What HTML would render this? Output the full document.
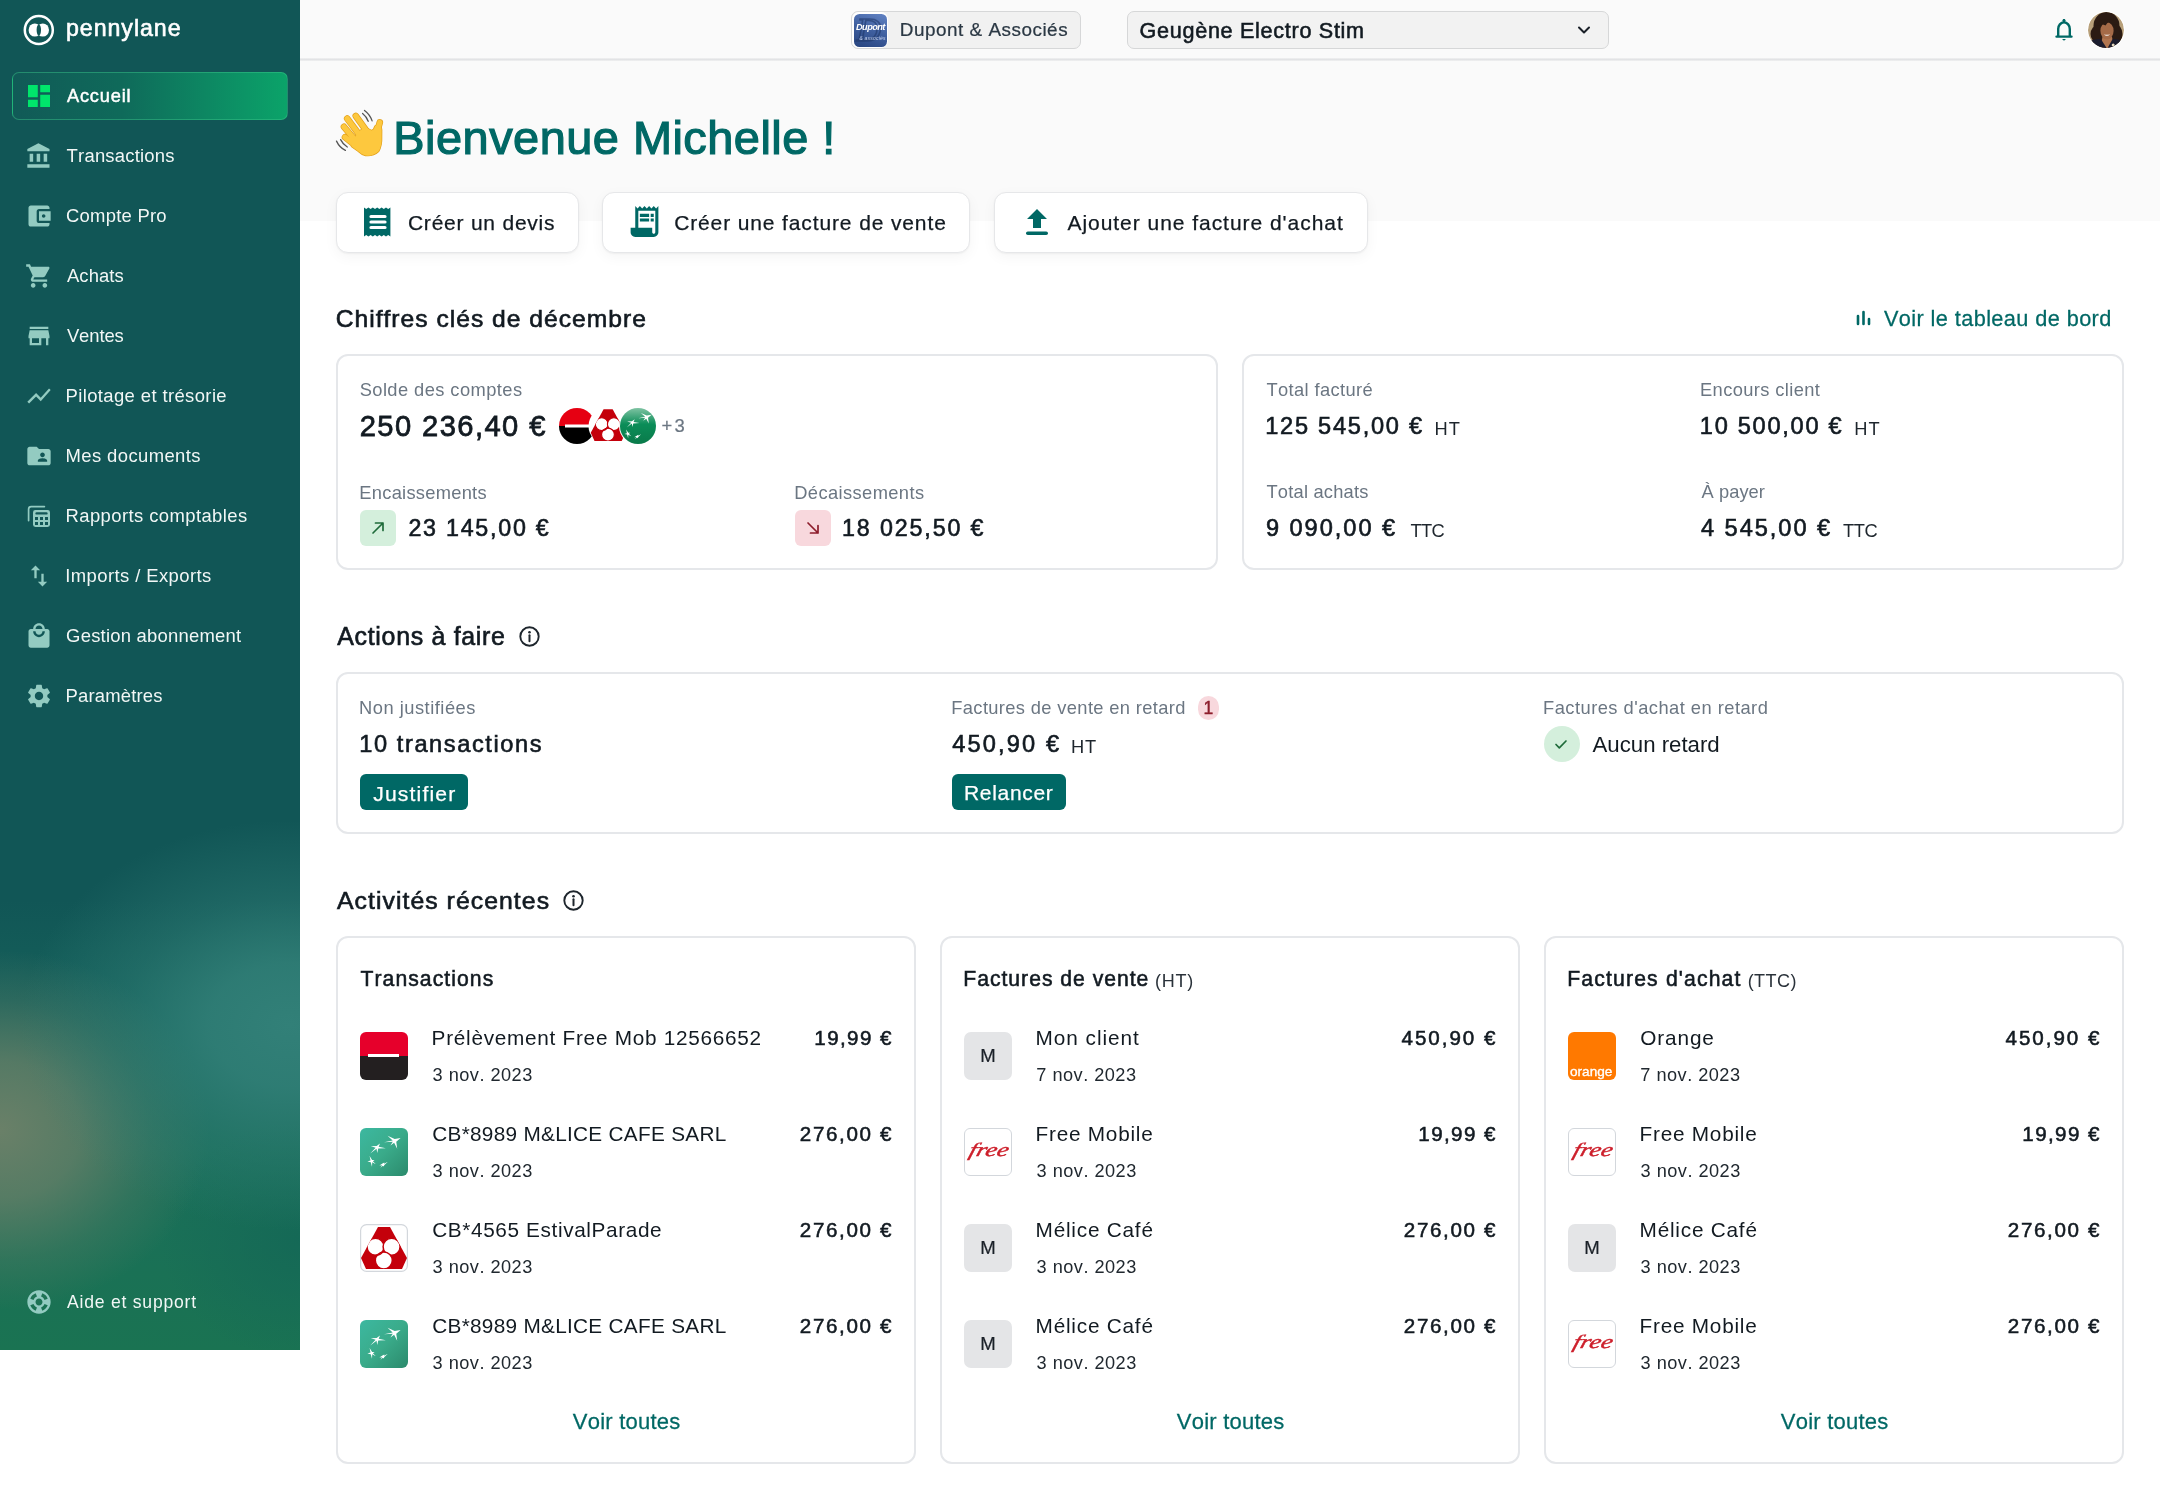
<!DOCTYPE html><html><head><meta charset="utf-8"><style>
*{margin:0;padding:0;box-sizing:border-box}
html,body{width:2160px;height:1500px;overflow:hidden;background:#fff}
body{position:relative;font-family:"Liberation Sans",sans-serif;color:#121a21}
.t{position:absolute;white-space:nowrap;font-kerning:none}
.b{position:absolute;display:block}
</style></head><body><div id="wrap" style="position:absolute;left:0;top:0;width:2160px;height:1500px;will-change:transform"><div class="b" style="left:300px;top:0px;width:1860px;height:221px;background:#fafafa"></div>
<div class="b" style="left:300px;top:58px;width:1860px;height:3px;background:linear-gradient(180deg,#f1f1f2,#e2e3e5,#f1f1f2)"></div>
<div class="b" style="left:0;top:0;width:300px;height:1350px;background:radial-gradient(ellipse 270px 205px at 290px 1025px, rgba(50,128,120,1) 0%, rgba(50,128,120,0.85) 30%, rgba(50,128,120,0.4) 62%, rgba(50,128,120,0) 100%),radial-gradient(ellipse 210px 180px at 0px 1130px, rgba(106,128,104,1) 0%, rgba(106,128,104,0.75) 38%, rgba(106,128,104,0.28) 72%, rgba(106,128,104,0) 100%),radial-gradient(ellipse 140px 120px at 300px 1240px, rgba(20,104,86,0.9) 0%, rgba(20,104,86,0) 100%),linear-gradient(180deg, #115656 0px, #115656 900px, #15605a 1000px, #1a6e5a 1150px, #1a7352 1350px)"></div>
<svg class="b" style="left:22px;top:13px;" width="34" height="34" viewBox="0 0 34 34"><circle cx="16.8" cy="17" r="14" fill="none" stroke="#fff" stroke-width="2.5"/><ellipse cx="12.8" cy="17" rx="6.2" ry="6.6" fill="#fff"/><ellipse cx="20.8" cy="17" rx="6.2" ry="6.6" fill="#fff"/><ellipse cx="16.8" cy="17" rx="2.2" ry="5.6" fill="#115656"/></svg>
<div class="t" style="left:66.00px;top:17.10px;font-size:23.2px;line-height:23.2px;letter-spacing:0.944px;-webkit-text-stroke:0.60px #fff;color:#fff;">pennylane</div>
<div class="b" style="left:12px;top:72px;width:276px;height:48px;border-radius:7px;background:linear-gradient(90deg,#115a57 0%,#0f6a5a 40%,#0c9566 85%,#0ba369 100%);border:1px solid rgba(60,200,140,0.45)"></div>
<svg class="b" style="left:28px;top:85px;" width="22" height="22" viewBox="3 3 18 18"><path fill="#00e56b" d="M3 13h8V3H3v10zm0 8h8v-6H3v6zm10 0h8V11h-8v10zm0-18v6h8V3h-8z"/></svg>
<div class="t" style="left:66.96px;top:87.36px;font-size:18.21px;line-height:18.21px;letter-spacing:0.842px;-webkit-text-stroke:0.47px #fff;color:#fff;">Accueil</div>
<svg class="b" style="left:25px;top:142px;" width="28" height="28" viewBox="0 0 24 24"><g fill="#93cbc1"><path d="M4 10v7h3v-7H4zm6 0v7h3v-7h-3zM2 22h19v-3H2v3zm14-12v7h3v-7h-3zm-4.5-9L2 6v2h19V6l-9.5-5z"/></g></svg>
<div class="t" style="left:66.59px;top:146.97px;font-size:18.46px;line-height:18.46px;letter-spacing:0.219px;color:#f2f7f6;">Transactions</div>
<svg class="b" style="left:25px;top:202px;" width="28" height="28" viewBox="0 0 24 24"><g fill="#93cbc1"><path d="M21 18v1c0 1.1-.9 2-2 2H5c-1.11 0-2-.9-2-2V5c0-1.1.89-2 2-2h14c1.1 0 2 .9 2 2v1h-9c-1.11 0-2 .9-2 2v8c0 1.1.89 2 2 2h9zm-9-2h10V8H12v8zm4-2.5c-.83 0-1.5-.67-1.5-1.5s.67-1.5 1.5-1.5 1.5.67 1.5 1.5-.67 1.5-1.5 1.5z"/></g></svg>
<div class="t" style="left:66.06px;top:206.97px;font-size:18.46px;line-height:18.46px;letter-spacing:0.236px;color:#f2f7f6;">Compte Pro</div>
<svg class="b" style="left:25px;top:262px;" width="28" height="28" viewBox="0 0 24 24"><g fill="#93cbc1"><path d="M7 18c-1.1 0-1.99.9-1.99 2S5.9 22 7 22s2-.9 2-2-.9-2-2-2zM1 2v2h2l3.6 7.59-1.35 2.45c-.16.28-.25.61-.25.96 0 1.1.9 2 2 2h12v-2H7.42c-.14 0-.25-.11-.25-.25l.03-.12.9-1.63h7.45c.75 0 1.41-.41 1.75-1.03l3.58-6.49c.08-.14.12-.31.12-.48 0-.55-.45-1-1-1H5.21l-.94-2H1zm16 16c-1.1 0-1.99.9-1.99 2s.89 2 1.99 2 2-.9 2-2-.9-2-2-2z"/></g></svg>
<div class="t" style="left:66.96px;top:266.97px;font-size:18.46px;line-height:18.46px;letter-spacing:0.094px;color:#f2f7f6;">Achats</div>
<svg class="b" style="left:25px;top:322px;" width="28" height="28" viewBox="0 0 24 24"><g fill="#93cbc1"><path d="M20 4H4v2h16V4zm1 10v-2l-1-5H4l-1 5v2h1v6h10v-6h4v6h2v-6h1zm-9 4H6v-4h6v4z"/></g></svg>
<div class="t" style="left:66.92px;top:326.97px;font-size:18.46px;line-height:18.46px;letter-spacing:-0.105px;color:#f2f7f6;">Ventes</div>
<svg class="b" style="left:25px;top:382px;" width="28" height="28" viewBox="0 0 24 24"><g fill="#93cbc1"><path d="M3.5 18.49l6-6.01 4 4L22 6.92l-1.41-1.41-7.09 7.97-4-4L2 16.99z"/></g></svg>
<div class="t" style="left:65.49px;top:386.97px;font-size:18.46px;line-height:18.46px;letter-spacing:0.39px;color:#f2f7f6;">Pilotage et trésorie</div>
<svg class="b" style="left:25px;top:442px;" width="28" height="28" viewBox="0 0 24 24"><g fill="#93cbc1"><path d="M20 6h-8l-2-2H4c-1.1 0-1.99.9-1.99 2L2 18c0 1.1.9 2 2 2h16c1.1 0 2-.9 2-2V8c0-1.1-.9-2-2-2zm-5 3c1.1 0 2 .9 2 2s-.9 2-2 2-2-.9-2-2 .9-2 2-2zm4 8h-8v-1c0-1.33 2.67-2 4-2s4 .67 4 2v1z"/></g></svg>
<div class="t" style="left:65.49px;top:446.97px;font-size:18.46px;line-height:18.46px;letter-spacing:0.407px;color:#f2f7f6;">Mes documents</div>
<svg class="b" style="left:24px;top:502px;" width="30" height="30" viewBox="0 0 30 30"><path d="M4.6 18.6V7.2Q4.6 4.6 7.2 4.6H20.4" fill="none" stroke="#93cbc1" stroke-width="1.7" stroke-linecap="round"/><rect x="9" y="8" width="17" height="17" rx="2.4" fill="#93cbc1"/><g fill="#115656"><rect x="11.4" y="10.2" width="12.2" height="2.4" rx="1.2"/><rect x="11" y="15" width="3" height="3"/><rect x="16" y="15" width="3" height="3"/><rect x="21" y="15" width="3" height="3"/><rect x="11" y="20" width="3" height="3"/><rect x="16" y="20" width="3" height="3"/><rect x="21" y="20" width="3" height="3"/></g></svg>
<div class="t" style="left:65.49px;top:506.97px;font-size:18.46px;line-height:18.46px;letter-spacing:0.414px;color:#f2f7f6;">Rapports comptables</div>
<svg class="b" style="left:25px;top:562px;" width="28" height="28" viewBox="0 0 24 24"><g fill="#93cbc1"><path d="M9 3L5 6.99h3V14h2V6.99h3L9 3zm7 14.01V10h-2v7.01h-3L15 21l4-3.99h-3z"/></g></svg>
<div class="t" style="left:65.30px;top:566.97px;font-size:18.46px;line-height:18.46px;letter-spacing:0.41px;color:#f2f7f6;">Imports / Exports</div>
<svg class="b" style="left:25px;top:622px;" width="28" height="28" viewBox="0 0 24 24"><g fill="#93cbc1"><path d="M19 6h-2c0-2.76-2.24-5-5-5S7 3.24 7 6H5c-1.1 0-1.99.9-1.99 2L3 20c0 1.1.9 2 2 2h14c1.1 0 2-.9 2-2V8c0-1.1-.9-2-2-2zm-7-3c1.66 0 3 1.34 3 3H9c0-1.66 1.34-3 3-3zm0 10c-2.76 0-5-2.24-5-5h2c0 1.66 1.34 3 3 3s3-1.34 3-3h2c0 2.76-2.24 5-5 5z"/></g></svg>
<div class="t" style="left:66.07px;top:626.97px;font-size:18.46px;line-height:18.46px;letter-spacing:0.234px;color:#f2f7f6;">Gestion abonnement</div>
<svg class="b" style="left:25px;top:682px;" width="28" height="28" viewBox="0 0 24 24"><g fill="#93cbc1"><path d="M19.14 12.94c.04-.3.06-.61.06-.94 0-.32-.02-.64-.07-.94l2.03-1.58c.18-.14.23-.41.12-.61l-1.92-3.32c-.12-.22-.37-.29-.59-.22l-2.39.96c-.5-.38-1.03-.7-1.62-.94l-.36-2.54c-.04-.24-.24-.41-.48-.41h-3.84c-.24 0-.43.17-.47.41l-.36 2.54c-.59.24-1.13.57-1.62.94l-2.39-.96c-.22-.08-.47 0-.59.22L2.74 8.87c-.12.21-.08.47.12.61l2.03 1.58c-.05.3-.09.63-.09.94s.02.64.07.94l-2.03 1.58c-.18.14-.23.41-.12.61l1.92 3.32c.12.22.37.29.59.22l2.39-.96c.5.38 1.03.7 1.62.94l.36 2.54c.05.24.24.41.48.41h3.84c.24 0 .44-.17.47-.41l.36-2.54c.59-.24 1.13-.56 1.62-.94l2.39.96c.22.08.47 0 .59-.22l1.92-3.32c.12-.22.07-.47-.12-.61l-2.01-1.58zM12 15.6c-1.98 0-3.6-1.62-3.6-3.6s1.62-3.6 3.6-3.6 3.6 1.62 3.6 3.6-1.62 3.6-3.6 3.6z"/></g></svg>
<div class="t" style="left:65.49px;top:686.97px;font-size:18.46px;line-height:18.46px;letter-spacing:0.186px;color:#f2f7f6;">Paramètres</div>
<svg class="b" style="left:25px;top:1288px;" width="28" height="28" viewBox="0 0 24 24"><path fill="#93cbc1" d="M12 2C6.48 2 2 6.48 2 12s4.48 10 10 10 10-4.48 10-10S17.52 2 12 2zm7.46 7.12-2.78 1.15c-.51-1.36-1.58-2.44-2.95-2.94l1.15-2.78c2.1.8 3.77 2.47 4.58 4.57zM12 15c-1.66 0-3-1.34-3-3s1.34-3 3-3 3 1.34 3 3-1.34 3-3 3zM9.13 4.54l1.17 2.78c-1.38.5-2.47 1.59-2.98 2.97L4.54 9.13c.81-2.110 2.48-3.78 4.59-4.59zM4.54 14.87l2.78-1.15c.51 1.38 1.59 2.46 2.97 2.96l-1.17 2.780c-2.1-.81-3.77-2.48-4.58-4.59zm10.34 4.59-1.15-2.78c1.37-.51 2.45-1.59 2.95-2.97l2.78 1.17c-.81 2.1-2.48 3.77-4.58 4.58z"/></svg>
<div class="t" style="left:66.97px;top:1293.70px;font-size:17.59px;line-height:17.59px;letter-spacing:0.774px;color:#f2f7f6;">Aide et support</div>
<div class="b" style="left:851px;top:11px;width:230px;height:38px;background:#f1f1f1;border:1px solid #d6d7d8;border-radius:7px"></div>
<div class="b" style="left:852px;top:12px;width:36px;height:36px;border-radius:7px;background:#fff;padding:1.5px"><div style="width:33px;height:33px;border-radius:5.5px;background:linear-gradient(200deg,#6283c4 0%,#3f5f9f 50%,#27447f 100%);position:relative;overflow:hidden"><div style="position:absolute;left:3px;top:-1px;font:italic 400 34px/34px 'Liberation Serif',serif;color:transparent;-webkit-text-stroke:1.6px rgba(30,52,100,0.55)">D</div><div style="position:absolute;left:2.5px;top:8.5px;font:italic 700 9.2px/10px 'Liberation Sans',sans-serif;color:#fff;letter-spacing:-0.55px">Dupont</div><div style="position:absolute;left:6px;top:21px;font:italic 400 5px/6px 'Liberation Sans',sans-serif;color:#c9d6f2;letter-spacing:0.2px">&amp; associés</div></div></div>
<div class="t" style="left:899.85px;top:20.76px;font-size:18.86px;line-height:18.86px;letter-spacing:0.524px;-webkit-text-stroke:0.23px #2b3844;color:#2b3844;">Dupont &amp; Associés</div>
<div class="b" style="left:1127px;top:11px;width:482px;height:38px;background:#f2f2f2;border:1px solid #d6d7d8;border-radius:7px"></div>
<div class="t" style="left:1139.62px;top:19.93px;font-size:21.57px;line-height:21.57px;letter-spacing:0.71px;-webkit-text-stroke:0.56px #121a21;color:#121a21;">Geugène Electro Stim</div>
<svg class="b" style="left:1577px;top:25px;" width="14" height="10" viewBox="0 0 14 10"><path d="M2 2.5l5 5 5-5" fill="none" stroke="#1a2028" stroke-width="2" stroke-linecap="round" stroke-linejoin="round"/></svg>
<svg class="b" style="left:2054px;top:18px;" width="20" height="24" viewBox="0 0 20 24"><path d="M10 2.2v1.6M4.2 18.2V11c0-3.6 2.5-6.6 5.8-6.6s5.8 3 5.8 6.6v7.2M2.5 18.6h15" fill="none" stroke="#006865" stroke-width="2.4" stroke-linecap="round"/><path d="M8 21h4l-2 1.8z" fill="#006865"/><circle cx="10" cy="2.6" r="1.5" fill="#006865"/></svg>
<div class="b" style="left:2087px;top:11px;width:38px;height:38px;border-radius:50%;background:#fff;padding:1px"><svg width="36" height="36" viewBox="0 0 36 36" style="display:block;border-radius:50%"><defs><clipPath id="av"><circle cx="18" cy="18" r="18"/></clipPath></defs><g clip-path="url(#av)"><rect width="36" height="36" fill="#b8a07a"/><ellipse cx="18.5" cy="14" rx="13" ry="14" fill="#2b1b13"/><ellipse cx="10" cy="22" rx="7.5" ry="9" fill="#2b1b13"/><ellipse cx="27" cy="22" rx="7.5" ry="10" fill="#2b1b13"/><path d="M12 36L14.5 25H24L26 36Z" fill="#b27650"/><ellipse cx="19" cy="18.8" rx="6.6" ry="8.6" fill="#a56b48"/><path d="M9 14Q12 4 26 8.5Q21 8 17.5 13.5Q14 11.5 9 14Z" fill="#2b1b13"/><path d="M15.8 22.4Q19 25.4 22.2 22.2Q19 23.4 15.8 22.4Z" fill="#fff"/><path d="M0 36V30Q6 26.5 13 27.2L18.6 36Z" fill="#1b1c2e"/><path d="M36 36V30Q30 26.5 24.5 27.2L19.6 36Z" fill="#1b1c2e"/><circle cx="25.2" cy="33" r="1.5" fill="#e5d9bd"/></g></svg></div>
<svg class="b" style="left:332px;top:106px;" width="56" height="56" viewBox="0 0 56 56"><g stroke="#555" stroke-width="1.3" fill="none" stroke-linecap="round"><path d="M30.6 7.5Q34.5 10.5 36.2 15.3"/><path d="M32.5 4.5Q38 8.5 40.1 14.9"/><path d="M8.6 33.6Q11 38.5 15.3 41"/><path d="M4.5 35.1Q7.5 41.5 13.4 44.4"/></g><g stroke="#e3a11c" stroke-width="6.6" stroke-linecap="round" fill="none"><path d="M23.8 10L33.5 23.5M15.2 12.6L27.5 29M12 20.8L23.5 34.5M13 31.2L21.5 38M47.8 16.5L45 26"/></g><g fill="#e3a11c" stroke="#e3a11c" stroke-width="1.4" stroke-linejoin="round"><path d="M20 37L26 26L33 21L39.5 24.5Q42 24 43 20L48.5 17Q50.2 24 49.6 30.5Q50 40 46.5 45.5Q41 50.5 33.5 49.5Q29.5 48.5 26.5 45.5L19.5 40.5Z"/></g><g stroke="#fdc83e" stroke-width="5.2" stroke-linecap="round" fill="none"><path d="M23.8 10L33.5 23.5M15.2 12.6L27.5 29M12 20.8L23.5 34.5M13 31.2L21.5 38M47.8 16.5L45 26"/></g><g fill="#fdc83e"><path d="M20 37L26 26L33 21L39.5 24.5Q42 24 43 20L48.5 17Q50.2 24 49.6 30.5Q50 40 46.5 45.5Q41 50.5 33.5 49.5Q29.5 48.5 26.5 45.5L19.5 40.5Z"/></g></svg>
<div class="t" style="left:393.35px;top:114.63px;font-size:46.92px;line-height:46.92px;letter-spacing:0.482px;-webkit-text-stroke:1.22px #006865;color:#006865;">Bienvenue Michelle !</div>
<div class="b" style="left:336px;top:192px;width:243px;height:61px;background:#fff;border:1px solid #e6e7e9;border-radius:12px;box-shadow:0 1px 2px rgba(0,0,0,0.05),0 4px 14px rgba(0,0,0,0.045)"></div>
<div class="b" style="left:602px;top:192px;width:368px;height:61px;background:#fff;border:1px solid #e6e7e9;border-radius:12px;box-shadow:0 1px 2px rgba(0,0,0,0.05),0 4px 14px rgba(0,0,0,0.045)"></div>
<div class="b" style="left:994px;top:192px;width:374px;height:61px;background:#fff;border:1px solid #e6e7e9;border-radius:12px;box-shadow:0 1px 2px rgba(0,0,0,0.05),0 4px 14px rgba(0,0,0,0.045)"></div>
<svg class="b" style="left:363px;top:206px;" width="30" height="32" viewBox="0 0 30 32"><path d="M1 1.5l2.2 1.6 2.2-1.6 2.2 1.6 2.2-1.6 2.2 1.6 2.2-1.6 2.2 1.6 2.2-1.6 2.2 1.6 2.2-1.6 2.2 1.6 2.2-1.6V30.5l-2.2-1.6-2.2 1.6-2.2-1.6-2.2 1.6-2.2-1.6-2.2 1.6-2.2-1.6-2.2 1.6-2.2-1.6-2.2 1.6-2.2-1.6-2.2 1.6z" fill="#006865"/><g stroke="#fff" stroke-width="3.2" stroke-linecap="round"><path d="M8 10.5h14M8 16h14M8 21.5h14"/></g></svg>
<div class="t" style="left:407.93px;top:211.77px;font-size:21.0px;line-height:21.0px;letter-spacing:0.774px;-webkit-text-stroke:0.25px #121a21;color:#121a21;">Créer un devis</div>
<svg class="b" style="left:626px;top:203px;" width="37" height="37" viewBox="0 0 24 24"><g fill="#006865"><path d="M19.5 3.5 18 2l-1.5 1.5L15 2l-1.5 1.5L12 2l-1.5 1.5L9 2 7.5 3.5 6 2v14H3v3c0 1.66 1.34 3 3 3h12c1.66 0 3-1.34 3-3V2l-1.5 1.5zM19 19c0 .55-.45 1-1 1s-1-.45-1-1v-3H8V5h11v14z"/><path d="M9 7h6v2H9zm7 0h2v2h-2zm-7 3h6v2H9zm7 0h2v2h-2z"/></g></svg>
<div class="t" style="left:674.13px;top:212.07px;font-size:21.0px;line-height:21.0px;letter-spacing:0.875px;-webkit-text-stroke:0.25px #121a21;color:#121a21;">Créer une facture de vente</div>
<svg class="b" style="left:1022px;top:206px;" width="30" height="32" viewBox="0 0 30 32"><path d="M15 3l-10 10h6v9h8v-9h6z" fill="#006865"/><rect x="4" y="25.5" width="22" height="3.6" rx="1.8" fill="#006865"/></svg>
<div class="t" style="left:1067.46px;top:212.07px;font-size:21.0px;line-height:21.0px;letter-spacing:0.96px;-webkit-text-stroke:0.25px #121a21;color:#121a21;">Ajouter une facture d'achat</div>
<div class="t" style="left:335.65px;top:306.65px;font-size:24.65px;line-height:24.65px;letter-spacing:1.004px;-webkit-text-stroke:0.64px #121a21;color:#121a21;">Chiffres clés de décembre</div>
<svg class="b" style="left:1855px;top:310px;" width="18" height="16" viewBox="0 0 18 16"><g stroke="#006865" stroke-width="2.6" stroke-linecap="round"><path d="M3 6v8M8.5 2v12M14 9v5"/></g></svg>
<div class="t" style="left:1883.90px;top:307.81px;font-size:21.71px;line-height:21.71px;letter-spacing:0.411px;-webkit-text-stroke:0.26px #006865;color:#006865;">Voir le tableau de bord</div>
<div class="b" style="left:336px;top:354px;width:882px;height:216px;background:#fff;border:2px solid #e5e7ea;border-radius:12px"></div>
<div class="b" style="left:1242px;top:354px;width:882px;height:216px;background:#fff;border:2px solid #e5e7ea;border-radius:12px"></div>
<div class="t" style="left:359.67px;top:381.25px;font-size:18.31px;line-height:18.31px;letter-spacing:0.423px;color:#6b7682;">Solde des comptes</div>
<div class="t" style="left:359.73px;top:411.96px;font-size:29.13px;line-height:29.13px;letter-spacing:1.417px;-webkit-text-stroke:0.76px #121a21;color:#121a21;">250 236,40 €</div>
<svg class="b" style="left:557px;top:406px;" width="102" height="40" viewBox="0 0 102 40"><defs><clipPath id="c1"><circle cx="20" cy="20" r="18"/></clipPath><linearGradient id="bnpg" x1="0" y1="0" x2="0" y2="1"><stop offset="0" stop-color="#7fc3a3"/><stop offset="0.45" stop-color="#0b8d58"/><stop offset="1" stop-color="#0a7a4a"/></linearGradient></defs><g clip-path="url(#c1)"><rect x="0" y="0" width="40" height="20" fill="#e60012"/><rect x="0" y="20" width="40" height="20" fill="#000"/><rect x="8" y="18.5" width="26" height="3" fill="#fff"/></g><circle cx="50" cy="20" r="18.5" fill="#fff"/><g transform="translate(33,1) scale(0.755)"><use href="#cmshape"/></g><circle cx="81" cy="20" r="19" fill="#fff"/><circle cx="81" cy="20" r="18" fill="url(#bnpg)"/><g fill="#fff" transform="translate(61.3,0.5) scale(0.82)"><use href="#bnpstars"/></g></svg>
<div class="t" style="left:661.60px;top:417.17px;font-size:18.43px;line-height:18.43px;letter-spacing:2.197px;-webkit-text-stroke:0.22px #6b7682;color:#6b7682;">+3</div>
<div class="t" style="left:359.30px;top:483.65px;font-size:18.31px;line-height:18.31px;letter-spacing:0.267px;color:#6b7682;">Encaissements</div>
<div class="b" style="left:360px;top:510px;width:36px;height:36px;background:#d4efdc;border-radius:6px"></div>
<svg class="b" style="left:369px;top:519px;" width="18" height="18" viewBox="0 0 18 18"><path d="M4 14L14 4M6.5 4H14v7.5" fill="none" stroke="#1f6b3a" stroke-width="1.7" stroke-linecap="round" stroke-linejoin="round"/></svg>
<div class="t" style="left:408.43px;top:517.07px;font-size:23.25px;line-height:23.25px;letter-spacing:1.748px;-webkit-text-stroke:0.60px #121a21;color:#121a21;">23 145,00 €</div>
<div class="t" style="left:794.20px;top:483.65px;font-size:18.31px;line-height:18.31px;letter-spacing:0.4px;color:#6b7682;">Décaissements</div>
<div class="b" style="left:795px;top:510px;width:36px;height:36px;background:#f8d8dd;border-radius:6px"></div>
<svg class="b" style="left:804px;top:519px;" width="18" height="18" viewBox="0 0 18 18"><path d="M4 4L14 14M14 6.5V14H6.5" fill="none" stroke="#8d1d2c" stroke-width="1.7" stroke-linecap="round" stroke-linejoin="round"/></svg>
<div class="t" style="left:842.03px;top:517.07px;font-size:23.25px;line-height:23.25px;letter-spacing:1.868px;-webkit-text-stroke:0.60px #121a21;color:#121a21;">18 025,50 €</div>
<div class="t" style="left:1266.49px;top:381.44px;font-size:18.31px;line-height:18.31px;letter-spacing:0.38px;color:#6b7682;">Total facturé</div>
<div class="t" style="left:1265.20px;top:415.44px;font-size:23.6px;line-height:23.6px;letter-spacing:1.74px;-webkit-text-stroke:0.61px #121a21;color:#121a21;">125 545,00 €</div>
<div class="t" style="left:1434.50px;top:420.05px;font-size:18.31px;line-height:18.31px;letter-spacing:1.015px;color:#1e262d;">HT</div>
<div class="t" style="left:1700.00px;top:381.44px;font-size:18.31px;line-height:18.31px;letter-spacing:0.387px;color:#6b7682;">Encours client</div>
<div class="t" style="left:1699.80px;top:415.44px;font-size:23.6px;line-height:23.6px;letter-spacing:1.726px;-webkit-text-stroke:0.61px #121a21;color:#121a21;">10 500,00 €</div>
<div class="t" style="left:1854.20px;top:420.05px;font-size:18.31px;line-height:18.31px;letter-spacing:1.015px;color:#1e262d;">HT</div>
<div class="t" style="left:1266.49px;top:483.44px;font-size:18.31px;line-height:18.31px;letter-spacing:0.203px;color:#6b7682;">Total achats</div>
<div class="t" style="left:1265.89px;top:517.44px;font-size:23.6px;line-height:23.6px;letter-spacing:1.977px;-webkit-text-stroke:0.61px #121a21;color:#121a21;">9 090,00 €</div>
<div class="t" style="left:1410.39px;top:522.05px;font-size:18.31px;line-height:18.31px;letter-spacing:-0.642px;color:#1e262d;">TTC</div>
<div class="t" style="left:1701.46px;top:483.44px;font-size:18.31px;line-height:18.31px;letter-spacing:0.073px;color:#6b7682;">À payer</div>
<div class="t" style="left:1701.06px;top:517.44px;font-size:23.6px;line-height:23.6px;letter-spacing:1.948px;-webkit-text-stroke:0.61px #121a21;color:#121a21;">4 545,00 €</div>
<div class="t" style="left:1843.09px;top:522.05px;font-size:18.31px;line-height:18.31px;letter-spacing:-0.442px;color:#1e262d;">TTC</div>
<div class="t" style="left:337.25px;top:624.31px;font-size:24.93px;line-height:24.93px;letter-spacing:0.699px;-webkit-text-stroke:0.65px #121a21;color:#121a21;">Actions à faire</div>
<svg class="b" style="left:518px;top:625px;" width="23" height="23" viewBox="0 0 23 23"><circle cx="11.5" cy="11.5" r="9.2" fill="none" stroke="#1e262d" stroke-width="1.9"/><circle cx="11.5" cy="7.2" r="1.3" fill="#1e262d"/><path d="M11.5 10.3v6" stroke="#1e262d" stroke-width="2" stroke-linecap="round"/></svg>
<div class="b" style="left:336px;top:672px;width:1788px;height:162px;background:#fff;border:2px solid #e5e7ea;border-radius:12px"></div>
<div class="t" style="left:359.10px;top:699.45px;font-size:18.31px;line-height:18.31px;letter-spacing:0.496px;color:#6b7682;">Non justifiées</div>
<div class="t" style="left:359.20px;top:733.44px;font-size:23.6px;line-height:23.6px;letter-spacing:1.6px;-webkit-text-stroke:0.61px #121a21;color:#121a21;">10 transactions</div>
<div class="b" style="left:360px;top:774px;width:108px;height:36px;background:#006865;border-radius:6px"></div>
<div class="t" style="left:373.17px;top:782.50px;font-size:21.14px;line-height:21.14px;letter-spacing:1.168px;-webkit-text-stroke:0.25px #fff;color:#fff;">Justifier</div>
<div class="t" style="left:951.30px;top:699.35px;font-size:18.31px;line-height:18.31px;letter-spacing:0.36px;color:#6b7682;">Factures de vente en retard</div>
<div class="b" style="left:1198px;top:696px;width:21px;height:24px;background:#f8d8dd;border-radius:11px"></div>
<div class="t" style="left:1203.39px;top:700.22px;font-size:17.51px;line-height:17.51px;letter-spacing:0px;-webkit-text-stroke:0.46px #8d1d2c;color:#8d1d2c;">1</div>
<div class="t" style="left:952.26px;top:733.44px;font-size:23.6px;line-height:23.6px;letter-spacing:2.137px;-webkit-text-stroke:0.61px #121a21;color:#121a21;">450,90 €</div>
<div class="t" style="left:1071.10px;top:738.05px;font-size:18.31px;line-height:18.31px;letter-spacing:0.715px;color:#1e262d;">HT</div>
<div class="b" style="left:952px;top:774px;width:114px;height:36px;background:#006865;border-radius:6px"></div>
<div class="t" style="left:963.98px;top:782.27px;font-size:21.0px;line-height:21.0px;letter-spacing:0.69px;-webkit-text-stroke:0.25px #fff;color:#fff;">Relancer</div>
<div class="t" style="left:1543.00px;top:699.35px;font-size:18.31px;line-height:18.31px;letter-spacing:0.473px;color:#6b7682;">Factures d'achat en retard</div>
<div class="b" style="left:1543.5px;top:726px;width:36px;height:36px;border-radius:50%;background:#d4efdc"></div>
<svg class="b" style="left:1552px;top:735px;" width="18" height="18" viewBox="0 0 18 18"><path d="M4 9.5l3.3 3.3L14 6" fill="none" stroke="#1f6b3a" stroke-width="1.7" stroke-linecap="round" stroke-linejoin="round"/></svg>
<div class="t" style="left:1592.56px;top:733.68px;font-size:22.24px;line-height:22.24px;letter-spacing:-0.015px;color:#121a21;">Aucun retard</div>
<svg width="0" height="0" style="position:absolute"><defs><clipPath id="hexclip"><path d="M18 3H30L47 34L42 45H6L1 34Z"/></clipPath><g id="cmshape"><path d="M18 3H30L47 34L42 45H6L1 34Z" fill="#c4000b"/><g clip-path="url(#hexclip)" fill="#fff" stroke="#c4000b" stroke-width="1.5"><circle cx="15.5" cy="22.8" r="8.5"/><circle cx="31.6" cy="22.8" r="8.5"/><circle cx="23.8" cy="36.5" r="8.5"/><path d="M22.9 27.6A8.5 8.5 0 0 1 15.5 31.3" fill="none"/></g></g><path id="bnpstars" d="M27.60,7.80L34.68,11.11L40.60,10.00L36.26,13.72L37.20,20.80L34.11,14.86L30.40,17.40L32.80,13.86L24.00,14.20L32.67,12.50ZM10.80,18.20L16.61,17.91L20.00,15.60L18.66,18.75L25.80,20.20L18.28,20.58L17.20,25.00L16.54,20.86L10.20,25.60L15.66,19.83ZM9.60,28.00L12.12,32.01L14.60,32.00L12.89,33.36L15.80,36.20L12.24,34.33L12.00,38.80L10.74,34.17L7.40,33.40L10.51,32.49ZM24.40,34.40L24.10,35.66L27.80,33.80L24.39,37.12L23.60,38.60L22.86,37.86L20.40,39.80L22.08,37.26L19.40,37.40L22.42,35.56Z"/><linearGradient id="bnpsq" x1="0" y1="0" x2="1" y2="1"><stop offset="0" stop-color="#3cb8a0"/><stop offset="0.5" stop-color="#3aab8a"/><stop offset="1" stop-color="#2b8a6c"/></linearGradient></defs></svg>
<div class="t" style="left:336.95px;top:888.68px;font-size:24.79px;line-height:24.79px;letter-spacing:1.052px;-webkit-text-stroke:0.64px #121a21;color:#121a21;">Activités récentes</div>
<svg class="b" style="left:561.5px;top:888.5px;" width="23" height="23" viewBox="0 0 23 23"><circle cx="11.5" cy="11.5" r="9.2" fill="none" stroke="#1e262d" stroke-width="1.9"/><circle cx="11.5" cy="7.2" r="1.3" fill="#1e262d"/><path d="M11.5 10.3v6" stroke="#1e262d" stroke-width="2" stroke-linecap="round"/></svg>
<div class="b" style="left:336px;top:936px;width:580px;height:528px;background:#fff;border:2px solid #e5e7ea;border-radius:12px"></div>
<div class="t" style="left:360.52px;top:967.85px;font-size:21.15px;line-height:21.15px;letter-spacing:1.06px;-webkit-text-stroke:0.55px #121a21;color:#121a21;">Transactions</div>
<div class="b" style="left:360px;top:1032px;width:48px;height:48px;border-radius:6px;overflow:hidden;background:linear-gradient(180deg,#e6002b 0,#e6002b 50%,#231f20 50%,#231f20 100%)"><div style="position:absolute;left:8px;top:22px;width:31px;height:3px;background:#fff"></div></div>
<div class="t" style="left:431.60px;top:1028.01px;font-size:20.78px;line-height:20.78px;letter-spacing:0.72px;color:#121a21;">Prélèvement Free Mob 12566652</div>
<div class="t" style="left:432.61px;top:1065.82px;font-size:18.17px;line-height:18.17px;letter-spacing:0.472px;color:#20282f;">3 nov. 2023</div>
<div class="t" style="left:814.33px;top:1028.04px;font-size:20.59px;line-height:20.59px;letter-spacing:1.394px;-webkit-text-stroke:0.54px #121a21;color:#121a21;">19,99 €</div>
<svg class="b" style="left:360px;top:1128px;" width="48" height="48" viewBox="0 0 48 48"><rect x="0" y="0" width="48" height="48" rx="6" fill="url(#bnpsq)"/><g fill="#fff"><use href="#bnpstars"/></g></svg>
<div class="t" style="left:432.24px;top:1124.01px;font-size:20.78px;line-height:20.78px;letter-spacing:0.29px;color:#121a21;">CB*8989 M&amp;LICE CAFE SARL</div>
<div class="t" style="left:432.61px;top:1161.82px;font-size:18.17px;line-height:18.17px;letter-spacing:0.472px;color:#20282f;">3 nov. 2023</div>
<div class="t" style="left:799.86px;top:1124.04px;font-size:20.59px;line-height:20.59px;letter-spacing:1.626px;-webkit-text-stroke:0.54px #121a21;color:#121a21;">276,00 €</div>
<svg class="b" style="left:360px;top:1224px;" width="48" height="48" viewBox="0 0 48 48"><rect x="0.6" y="0.6" width="46.8" height="46.8" rx="6" fill="#fff" stroke="#d3d7dc" stroke-width="1.2"/><use href="#cmshape"/></svg>
<div class="t" style="left:432.24px;top:1220.01px;font-size:20.78px;line-height:20.78px;letter-spacing:0.621px;color:#121a21;">CB*4565 EstivalParade</div>
<div class="t" style="left:432.61px;top:1257.82px;font-size:18.17px;line-height:18.17px;letter-spacing:0.472px;color:#20282f;">3 nov. 2023</div>
<div class="t" style="left:799.86px;top:1220.04px;font-size:20.59px;line-height:20.59px;letter-spacing:1.626px;-webkit-text-stroke:0.54px #121a21;color:#121a21;">276,00 €</div>
<svg class="b" style="left:360px;top:1320px;" width="48" height="48" viewBox="0 0 48 48"><rect x="0" y="0" width="48" height="48" rx="6" fill="url(#bnpsq)"/><g fill="#fff"><use href="#bnpstars"/></g></svg>
<div class="t" style="left:432.24px;top:1316.01px;font-size:20.78px;line-height:20.78px;letter-spacing:0.29px;color:#121a21;">CB*8989 M&amp;LICE CAFE SARL</div>
<div class="t" style="left:432.61px;top:1353.82px;font-size:18.17px;line-height:18.17px;letter-spacing:0.472px;color:#20282f;">3 nov. 2023</div>
<div class="t" style="left:799.86px;top:1316.04px;font-size:20.59px;line-height:20.59px;letter-spacing:1.626px;-webkit-text-stroke:0.54px #121a21;color:#121a21;">276,00 €</div>
<div class="t" style="left:572.75px;top:1411.47px;font-size:22.0px;line-height:22.0px;letter-spacing:0.242px;-webkit-text-stroke:0.26px #006865;color:#006865;">Voir toutes</div>
<div class="b" style="left:940px;top:936px;width:580px;height:528px;background:#fff;border:2px solid #e5e7ea;border-radius:12px"></div>
<div class="t" style="left:963.27px;top:967.85px;font-size:21.15px;line-height:21.15px;letter-spacing:0.993px;-webkit-text-stroke:0.55px #121a21;color:#121a21;">Factures de vente</div>
<div class="t" style="left:1154.88px;top:971.69px;font-size:18.02px;line-height:18.02px;letter-spacing:0.771px;color:#2a323a;">(HT)</div>
<div class="b" style="left:964px;top:1032px;width:48px;height:48px;background:#e4e5e7;border-radius:7px"></div>
<div class="t" style="left:980.27px;top:1046.80px;font-size:18.57px;line-height:18.57px;letter-spacing:0px;-webkit-text-stroke:0.22px #1a2028;color:#1a2028;">M</div>
<div class="t" style="left:1035.60px;top:1028.01px;font-size:20.78px;line-height:20.78px;letter-spacing:0.95px;color:#121a21;">Mon client</div>
<div class="t" style="left:1036.37px;top:1065.82px;font-size:18.17px;line-height:18.17px;letter-spacing:0.472px;color:#20282f;">7 nov. 2023</div>
<div class="t" style="left:1401.53px;top:1028.04px;font-size:20.59px;line-height:20.59px;letter-spacing:1.959px;-webkit-text-stroke:0.54px #121a21;color:#121a21;">450,90 €</div>
<div class="b" style="left:964px;top:1128px;width:48px;height:48px;border-radius:6px;background:#fff;border:1.2px solid #d3d7dc"></div>
<div class="t" style="left:967.5px;top:1138px;font:italic 400 19px/24px 'Liberation Serif',serif;color:#cd1f2b;letter-spacing:0px;-webkit-text-stroke:0.45px #cd1f2b;transform:scaleX(1.36) skewX(-12deg);transform-origin:0 18px">free</div>
<div class="t" style="left:1035.60px;top:1124.01px;font-size:20.78px;line-height:20.78px;letter-spacing:0.751px;color:#121a21;">Free Mobile</div>
<div class="t" style="left:1036.61px;top:1161.82px;font-size:18.17px;line-height:18.17px;letter-spacing:0.472px;color:#20282f;">3 nov. 2023</div>
<div class="t" style="left:1418.33px;top:1124.04px;font-size:20.59px;line-height:20.59px;letter-spacing:1.394px;-webkit-text-stroke:0.54px #121a21;color:#121a21;">19,99 €</div>
<div class="b" style="left:964px;top:1224px;width:48px;height:48px;background:#e4e5e7;border-radius:7px"></div>
<div class="t" style="left:980.27px;top:1238.80px;font-size:18.57px;line-height:18.57px;letter-spacing:0px;-webkit-text-stroke:0.22px #1a2028;color:#1a2028;">M</div>
<div class="t" style="left:1035.60px;top:1220.01px;font-size:20.78px;line-height:20.78px;letter-spacing:0.771px;color:#121a21;">Mélice Café</div>
<div class="t" style="left:1036.61px;top:1257.82px;font-size:18.17px;line-height:18.17px;letter-spacing:0.472px;color:#20282f;">3 nov. 2023</div>
<div class="t" style="left:1403.86px;top:1220.04px;font-size:20.59px;line-height:20.59px;letter-spacing:1.626px;-webkit-text-stroke:0.54px #121a21;color:#121a21;">276,00 €</div>
<div class="b" style="left:964px;top:1320px;width:48px;height:48px;background:#e4e5e7;border-radius:7px"></div>
<div class="t" style="left:980.27px;top:1334.80px;font-size:18.57px;line-height:18.57px;letter-spacing:0px;-webkit-text-stroke:0.22px #1a2028;color:#1a2028;">M</div>
<div class="t" style="left:1035.60px;top:1316.01px;font-size:20.78px;line-height:20.78px;letter-spacing:0.771px;color:#121a21;">Mélice Café</div>
<div class="t" style="left:1036.61px;top:1353.82px;font-size:18.17px;line-height:18.17px;letter-spacing:0.472px;color:#20282f;">3 nov. 2023</div>
<div class="t" style="left:1403.86px;top:1316.04px;font-size:20.59px;line-height:20.59px;letter-spacing:1.626px;-webkit-text-stroke:0.54px #121a21;color:#121a21;">276,00 €</div>
<div class="t" style="left:1176.75px;top:1411.47px;font-size:22.0px;line-height:22.0px;letter-spacing:0.242px;-webkit-text-stroke:0.26px #006865;color:#006865;">Voir toutes</div>
<div class="b" style="left:1544px;top:936px;width:580px;height:528px;background:#fff;border:2px solid #e5e7ea;border-radius:12px"></div>
<div class="t" style="left:1567.27px;top:967.85px;font-size:21.15px;line-height:21.15px;letter-spacing:1.167px;-webkit-text-stroke:0.55px #121a21;color:#121a21;">Factures d'achat</div>
<div class="t" style="left:1747.68px;top:971.69px;font-size:18.02px;line-height:18.02px;letter-spacing:0.426px;color:#2a323a;">(TTC)</div>
<div class="b" style="left:1568px;top:1032px;width:48px;height:48px;background:#ff7900;border-radius:6px"></div>
<div class="t" style="left:1570.03px;top:1064.82px;font-size:13.6px;line-height:13.6px;letter-spacing:0px;-webkit-text-stroke:0.35px #fff;color:#fff;">orange</div>
<div class="t" style="left:1640.32px;top:1028.01px;font-size:20.78px;line-height:20.78px;letter-spacing:0.859px;color:#121a21;">Orange</div>
<div class="t" style="left:1640.37px;top:1065.82px;font-size:18.17px;line-height:18.17px;letter-spacing:0.472px;color:#20282f;">7 nov. 2023</div>
<div class="t" style="left:2005.53px;top:1028.04px;font-size:20.59px;line-height:20.59px;letter-spacing:1.959px;-webkit-text-stroke:0.54px #121a21;color:#121a21;">450,90 €</div>
<div class="b" style="left:1568px;top:1128px;width:48px;height:48px;border-radius:6px;background:#fff;border:1.2px solid #d3d7dc"></div>
<div class="t" style="left:1571.5px;top:1138px;font:italic 400 19px/24px 'Liberation Serif',serif;color:#cd1f2b;letter-spacing:0px;-webkit-text-stroke:0.45px #cd1f2b;transform:scaleX(1.36) skewX(-12deg);transform-origin:0 18px">free</div>
<div class="t" style="left:1639.60px;top:1124.01px;font-size:20.78px;line-height:20.78px;letter-spacing:0.751px;color:#121a21;">Free Mobile</div>
<div class="t" style="left:1640.61px;top:1161.82px;font-size:18.17px;line-height:18.17px;letter-spacing:0.472px;color:#20282f;">3 nov. 2023</div>
<div class="t" style="left:2022.33px;top:1124.04px;font-size:20.59px;line-height:20.59px;letter-spacing:1.394px;-webkit-text-stroke:0.54px #121a21;color:#121a21;">19,99 €</div>
<div class="b" style="left:1568px;top:1224px;width:48px;height:48px;background:#e4e5e7;border-radius:7px"></div>
<div class="t" style="left:1584.27px;top:1238.80px;font-size:18.57px;line-height:18.57px;letter-spacing:0px;-webkit-text-stroke:0.22px #1a2028;color:#1a2028;">M</div>
<div class="t" style="left:1639.60px;top:1220.01px;font-size:20.78px;line-height:20.78px;letter-spacing:0.771px;color:#121a21;">Mélice Café</div>
<div class="t" style="left:1640.61px;top:1257.82px;font-size:18.17px;line-height:18.17px;letter-spacing:0.472px;color:#20282f;">3 nov. 2023</div>
<div class="t" style="left:2007.86px;top:1220.04px;font-size:20.59px;line-height:20.59px;letter-spacing:1.626px;-webkit-text-stroke:0.54px #121a21;color:#121a21;">276,00 €</div>
<div class="b" style="left:1568px;top:1320px;width:48px;height:48px;border-radius:6px;background:#fff;border:1.2px solid #d3d7dc"></div>
<div class="t" style="left:1571.5px;top:1330px;font:italic 400 19px/24px 'Liberation Serif',serif;color:#cd1f2b;letter-spacing:0px;-webkit-text-stroke:0.45px #cd1f2b;transform:scaleX(1.36) skewX(-12deg);transform-origin:0 18px">free</div>
<div class="t" style="left:1639.60px;top:1316.01px;font-size:20.78px;line-height:20.78px;letter-spacing:0.751px;color:#121a21;">Free Mobile</div>
<div class="t" style="left:1640.61px;top:1353.82px;font-size:18.17px;line-height:18.17px;letter-spacing:0.472px;color:#20282f;">3 nov. 2023</div>
<div class="t" style="left:2007.86px;top:1316.04px;font-size:20.59px;line-height:20.59px;letter-spacing:1.626px;-webkit-text-stroke:0.54px #121a21;color:#121a21;">276,00 €</div>
<div class="t" style="left:1780.75px;top:1411.47px;font-size:22.0px;line-height:22.0px;letter-spacing:0.242px;-webkit-text-stroke:0.26px #006865;color:#006865;">Voir toutes</div></div></body></html>
